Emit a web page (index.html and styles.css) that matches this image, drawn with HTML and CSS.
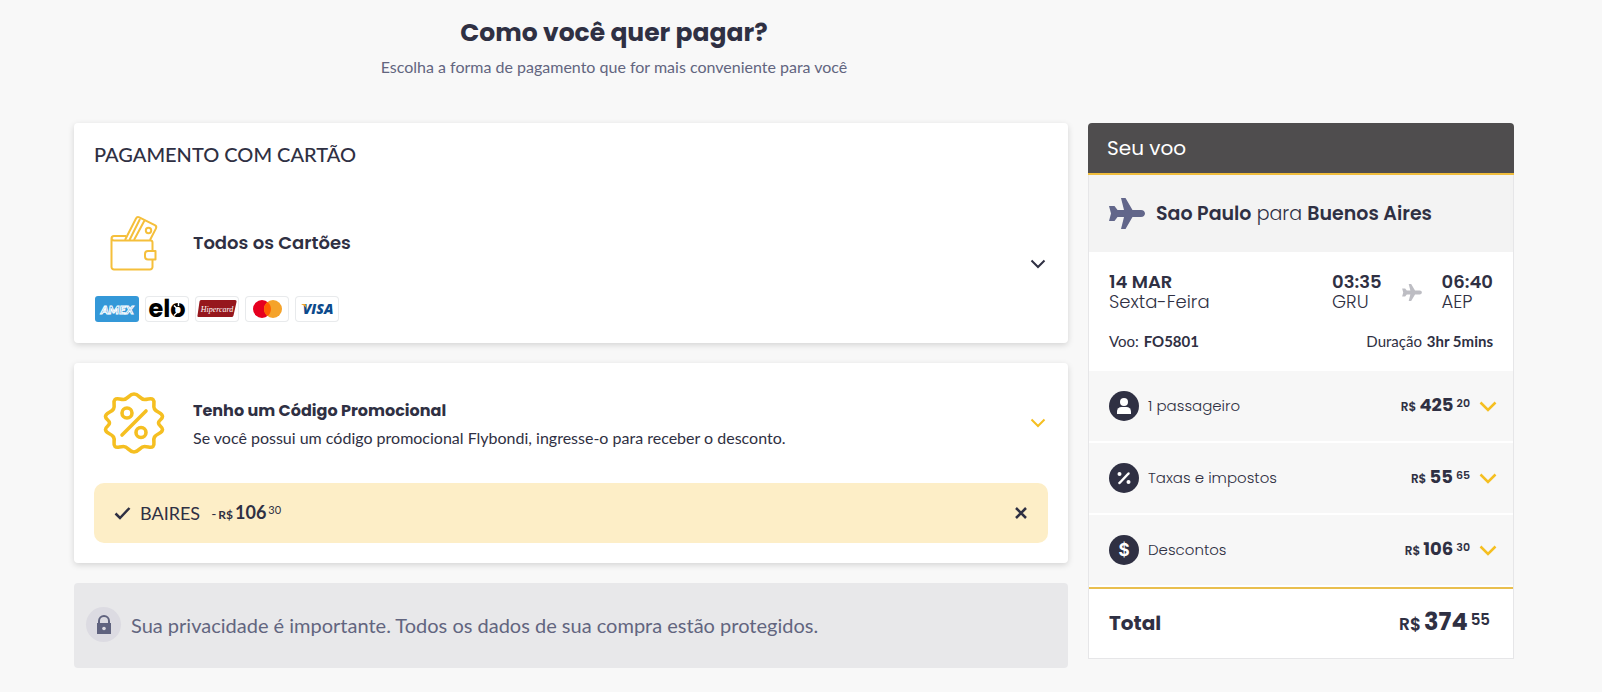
FILE: index.html
```html
<!DOCTYPE html>
<html lang="pt-BR">
<head>
    <meta charset="UTF-8">
    <meta name="viewport" content="width=device-width, initial-scale=1.0">
    <title>Pagamento</title>
    <link rel="stylesheet" href="styles.css">
</head>
<body>
    <div class="container">
        <header class="page-header">
            <h1>Como você quer pagar?</h1>
            <p>Escolha a forma de pagamento que for mais conveniente para você</p>
        </header>

        <div class="layout">
            <main class="payment">
                <!-- Card payment -->
                <section class="card">
                    <h2>PAGAMENTO COM CARTÃO</h2>
                    <div class="method">
                        <div class="method-main">
                            <div class="method-row">
                                <div class="method-icon">
                                    <svg width="48" height="56" viewBox="0 0 48 56" fill="none" stroke="#f5bf3b" stroke-width="2" stroke-linejoin="round">
                                        <path d="M15 25 26 3.500c.7-1.400 1.900-1.900 3.300-1.200l15.500 7.900c1.400.7 1.800 1.800 1.200 3.200L40 25"/>
                                        <path d="M19.500 25 30 4M24 25 34.500 5.500"/>
                                        <circle cx="38.500" cy="15.500" r="2.700"/>
                                        <path d="M16 21H4a2.500 2.500 0 0 0-2.500 2.500V52A2.500 2.500 0 0 0 4 54.500h36a2.500 2.500 0 0 0 2.500-2.500v-7.500M42.500 36v-8.500a2 2 0 0 0-2-2H4a2 2 0 0 1-2-2"/>
                                        <path d="M45.500 36h-7.500a3 3 0 0 0-3 3v2.500a3 3 0 0 0 3 3h7.500z"/>
                                    </svg>
                                </div>
                                <h3>Todos os Cartões</h3>
                            </div>
                            <div class="brands">
                                <svg class="brand" viewBox="0 0 44 26" role="img" aria-label="Amex">
                                    <rect width="44" height="26" rx="3" fill="#3498d8"/>
                                    <text class="logo-amex" x="22" y="18" text-anchor="middle">AMEX</text>
                                </svg>
                                <svg class="brand brand-outline" viewBox="0 0 44 26" role="img" aria-label="Elo">
                                    <text class="logo-elo" x="22" y="21" text-anchor="middle">elo</text>
                                    <path d="M29 9.500l3 3M29 19.500l3-3M33.500 5v5" stroke="#fff" stroke-width="1.500"/>
                                </svg>
                                <svg class="brand brand-outline" viewBox="0 0 44 26" role="img" aria-label="Hipercard">
                                    <path d="M6 4h34a1.500 1.500 0 0 1 1.500 2l-3 13.500a2 2 0 0 1-2 1.500h-33a1 1 0 0 1-1-1.500L4.500 5.500A2 2 0 0 1 6 4z" fill="#96171d"/>
                                    <text class="logo-hiper" x="22" y="16" text-anchor="middle">Hipercard</text>
                                </svg>
                                <svg class="brand brand-outline" viewBox="0 0 44 26" role="img" aria-label="Mastercard">
                                    <circle cx="17" cy="13" r="9" fill="#e6001f"/>
                                    <circle cx="28" cy="13" r="9" fill="#f5a32a"/>
                                    <path d="M22.500 5.900a9 9 0 0 1 0 14.200 9 9 0 0 1 0-14.200z" fill="#ff5f00"/>
                                </svg>
                                <svg class="brand brand-outline" viewBox="0 0 44 26" role="img" aria-label="Visa">
                                    <text class="logo-visa" x="23" y="18" text-anchor="middle">VISA</text>
                                    <path d="M6.500 8h4l1.500 5.500C11 11 9 9.200 6.500 8.500z" fill="#f0a52b"/>
                                </svg>
                            </div>
                        </div>
                        <button class="toggle" type="button" aria-label="Abrir cartões">
                            <svg width="16" height="10" viewBox="0 0 16 10"><path d="M1.500 1.500 8 8l6.500-6.500"/></svg>
                        </button>
                    </div>
                </section>

                <!-- Promo code -->
                <section class="card">
                    <div class="method">
                        <div class="method-main">
                            <div class="method-row promo-row">
                                <div class="method-icon">
                                    <svg width="62" height="64" viewBox="-31 -32 62 64" fill="none" stroke="#f5bf21" stroke-width="3.600" stroke-linecap="round" stroke-linejoin="round">
                                        <path d="M0-29C5-29 6-23.500 10.500-23.500C14.500-23.500 17-25.500 19-23.500C21.500-21 18.500-17.500 20.500-14C22.500-10.500 28.500-10.500 28.500-6.500C28.500-3.500 24.500-3 24.500 0C24.500 3 28.500 3.500 28.500 6.500C28.500 10.500 22.500 10.500 20.500 14C18.500 17.500 21.500 21 19 23.500C17 25.500 14.500 23.500 10.500 23.500C6 23.500 5 29 0 29C-5 29-6 23.500-10.500 23.500C-14.500 23.500-17 25.500-19 23.500C-21.500 21-18.500 17.500-20.500 14C-22.500 10.500-28.500 10.500-28.500 6.500C-28.500 3.500-24.500 3-24.500 0C-24.500-3-28.500-3.500-28.500-6.500C-28.500-10.500-22.500-10.500-20.500-14C-18.500-17.500-21.500-21-19-23.500C-17-25.500-14.500-23.500-10.500-23.500C-6-23.500-5-29 0-29z"/>
                                        <circle cx="-7" cy="-10" r="5"/>
                                        <circle cx="7" cy="9.500" r="5"/>
                                        <path d="M12-12-12 12"/>
                                    </svg>
                                </div>
                                <div class="promo-text">
                                    <h3 class="promo-title">Tenho um Código Promocional</h3>
                                    <p>Se você possui um código promocional Flybondi, ingresse-o para receber o desconto.</p>
                                </div>
                            </div>
                        </div>
                        <button class="toggle toggle-yellow" type="button" aria-label="Abrir código promocional">
                            <svg width="16" height="10" viewBox="0 0 16 10"><path d="M1.500 1.500 8 8l6.500-6.500"/></svg>
                        </button>
                    </div>
                    <div class="coupon">
                        <svg width="17" height="14" viewBox="0 0 17 14" fill="none" stroke="#2f3043" stroke-width="2.500"><path d="M1.500 7.500 6 12 15.500 2"/></svg>
                        <span class="coupon-code">BAIRES</span>
                        <span class="coupon-price">- <small>R$</small><b>106</b><sup>30</sup></span>
                        <button class="coupon-remove" type="button" aria-label="Remover código">
                            <svg width="14" height="14" viewBox="0 0 14 14" fill="none" stroke="#2f3043" stroke-width="2.500"><path d="M2 2l10 10M12 2 2 12"/></svg>
                        </button>
                    </div>
                </section>

                <div class="privacy">
                    <span class="privacy-icon">
                        <svg width="16" height="20" viewBox="0 0 16 20">
                            <path d="M3 9V6a5 5 0 0 1 10 0v3" fill="none" stroke="#60637f" stroke-width="2"/>
                            <path d="M1 8h14v11H1z" fill="#60637f"/>
                            <circle cx="8" cy="13.500" r="1.800" fill="#dcdbe2"/>
                        </svg>
                    </span>
                    <p>Sua privacidade é importante. Todos os dados de sua compra estão protegidos.</p>
                </div>
            </main>

            <!-- Flight summary -->
            <aside class="summary">
                <h2>Seu voo</h2>
                <div class="summary-body">
                    <div class="route">
                        <svg width="36" height="31" viewBox="0 0 36 31" fill="#62668a"><path d="M12 0h4.500l7 12H32c2.500 0 4 1.700 4 3.500S34.500 19 32 19h-8.500l-7 12H12l3-12H8.500l-3 4H0l2-7.500L0 8h5.500l3 4H15z"/></svg>
                        <p><b>Sao Paulo</b> para <b>Buenos Aires</b></p>
                    </div>
                    <div class="flight">
                        <div class="flight-times">
                            <p><b>14 MAR</b><br>Sexta-Feira</p>
                            <p class="departure"><b>03:35</b><br>GRU</p>
                            <svg width="20" height="17" viewBox="0 0 36 31" fill="#bdbdc3"><path d="M12 0h4.500l7 12H32c2.500 0 4 1.700 4 3.500S34.500 19 32 19h-8.500l-7 12H12l3-12H8.500l-3 4H0l2-7.500L0 8h5.500l3 4H15z"/></svg>
                            <p><b>06:40</b><br>AEP</p>
                        </div>
                        <div class="flight-info">
                            <p>Voo: <b>FO5801</b></p>
                            <p>Duração <b>3hr 5mins</b></p>
                        </div>
                    </div>
                    <div class="line">
                        <svg class="line-icon" viewBox="0 0 30 30"><circle cx="15" cy="15" r="15" fill="#2f3043"/><g fill="#fff"><circle cx="15" cy="11" r="4"/><path d="M8 23v-2.500a4.500 4.500 0 0 1 4.500-4.500h5a4.500 4.500 0 0 1 4.500 4.500V23z"/></g></svg>
                        <span class="line-label">1 passageiro</span>
                        <span class="price"><small>R$</small><b>425</b><sup>20</sup></span>
                        <button class="toggle toggle-yellow" type="button" aria-label="Ver passageiros">
                            <svg width="18" height="11" viewBox="0 0 18 11"><path d="M1.500 1.500 9 9l7.500-7.500"/></svg>
                        </button>
                    </div>
                    <div class="line">
                        <svg class="line-icon" viewBox="0 0 30 30"><circle cx="15" cy="15" r="15" fill="#2f3043"/><circle cx="10.500" cy="11" r="2" fill="#fff"/><circle cx="19.500" cy="19" r="2" fill="#fff"/><path d="M19.500 10.500 10.500 20" stroke="#fff" stroke-width="2.500" stroke-linecap="round"/></svg>
                        <span class="line-label">Taxas e impostos</span>
                        <span class="price"><small>R$</small><b>55</b><sup>65</sup></span>
                        <button class="toggle toggle-yellow" type="button" aria-label="Ver taxas">
                            <svg width="18" height="11" viewBox="0 0 18 11"><path d="M1.500 1.500 9 9l7.500-7.500"/></svg>
                        </button>
                    </div>
                    <div class="line">
                        <svg class="line-icon" viewBox="0 0 30 30"><circle cx="15" cy="15" r="15" fill="#2f3043"/><text class="icon-dollar" x="15" y="21" text-anchor="middle">$</text></svg>
                        <span class="line-label">Descontos</span>
                        <span class="price"><small>R$</small><b>106</b><sup>30</sup></span>
                        <button class="toggle toggle-yellow" type="button" aria-label="Ver descontos">
                            <svg width="18" height="11" viewBox="0 0 18 11"><path d="M1.500 1.500 9 9l7.500-7.500"/></svg>
                        </button>
                    </div>
                    <div class="total">
                        <span>Total</span>
                        <span class="price price-total"><small>R$</small><b>374</b><sup>55</sup></span>
                    </div>
                </div>
            </aside>
        </div>
    </div>
</body>
</html>
```
FILE: styles.css
```css
* {
    box-sizing: border-box;
}
body {
    margin: 0;
    padding-right: 14px;
    background-color: #f8f8f8;
    color: #2f3043;
    font-family: Lato, sans-serif;
    font-size: 16px;
    line-height: 24px;
}
h1, h2, h3, p {
    margin: 0;
}
svg {
    display: block;
    flex: none;
    overflow: visible;
}
button {
    padding: 0;
    border: 0;
    background: none;
    cursor: pointer;
}
.container {
    max-width: 1440px;
    margin: 0 auto;
}
.page-header {
    width: 75%;
    padding: 17px 0 44px;
    text-align: center;
}
.page-header h1 {
    font-family: Poppins, Inter, sans-serif;
    font-size: 25px;
    font-weight: 700;
    line-height: 32px;
}
.page-header p {
    margin-top: 6px;
    color: #62657f;
}
.layout {
    display: grid;
    grid-template-columns: minmax(0, 7fr) minmax(0, 3fr);
    align-items: start;
    gap: 20px;
}

/* Payment methods */
.payment {
    display: flex;
    flex-direction: column;
    gap: 20px;
}
.card {
    padding: 20px;
    background: #fff;
    border-radius: 4px;
    box-shadow: 0 2px 6px rgba(0, 0, 0, 0.15);
}
.card h2 {
    margin-bottom: 40px;
    font-size: 20px;
    font-weight: 500;
    line-height: 22px;
}
.card h3 {
    font-family: Poppins, Inter, sans-serif;
    font-size: 18px;
    font-weight: 600;
}
.card .promo-title {
    font-size: 16px;
    font-weight: 700;
}
.method {
    display: flex;
    align-items: center;
    justify-content: space-between;
}
.method-row {
    display: flex;
    align-items: center;
    gap: 19px;
    height: 76px;
}
.promo-row {
    height: 80px;
}
.promo-text {
    padding-top: 3px;
}
.promo-text p {
    margin-top: 3px;
}
.method-icon {
    display: flex;
    justify-content: center;
    width: 80px;
}
.brands {
    display: flex;
    gap: 6px;
    margin-top: 15px;
    padding: 0 0 1px 1px;
}
.brand {
    width: 44px;
    height: 26px;
}
.brand-outline {
    border-radius: 4px;
    box-shadow: inset 0 0 0 1px #e8eaec;
}
.logo-amex {
    fill: none;
    stroke: #fff;
    stroke-width: 1px;
    font: italic 900 12px Lato, sans-serif;
}
.logo-elo {
    font: 700 24px Poppins, Inter, sans-serif;
}
.logo-hiper {
    fill: #fff;
    font: italic 400 8px "Liberation Serif", serif;
}
.logo-visa {
    fill: #0c4a8c;
    font: italic 800 14px "Open Sans", sans-serif;
}
.toggle svg {
    fill: none;
    stroke: #2f3043;
    stroke-width: 2px;
}
.method .toggle {
    margin-right: 2px;
}
.toggle-yellow svg {
    stroke: #f5bf21;
}
.coupon {
    display: flex;
    align-items: center;
    height: 60px;
    margin-top: 20px;
    padding: 0 20px;
    background-color: #fdeec7;
    border-radius: 10px;
}
.coupon-code {
    margin-left: 9px;
    font-size: 18px;
}
.coupon-price {
    display: flex;
    align-items: baseline;
    gap: 2px;
    margin-left: 11px;
    font-size: 14px;
}
.coupon-price small {
    font-size: 12px;
    font-weight: 700;
}
.coupon-price b {
    font-size: 18px;
}
.coupon-price sup {
    align-self: flex-start;
    font-size: 11px;
    line-height: 20px;
}
.coupon-remove {
    margin-left: auto;
}
.privacy {
    display: flex;
    align-items: center;
    gap: 10px;
    min-height: 85px;
    padding: 0 12px 2px;
    background-color: #e8e8ea;
    border-radius: 4px;
    color: #62657f;
    font-size: 20px;
}
.privacy-icon {
    display: flex;
    align-items: center;
    justify-content: center;
    width: 35px;
    height: 35px;
    background-color: #dcdbe2;
    border-radius: 50%;
}

/* Flight summary */
.summary {
    font-family: Poppins, Inter, sans-serif;
}
.summary h2 {
    padding: 13px 19px;
    background-color: #4f4d4e;
    border-bottom: 2px solid #f0bd3c;
    border-radius: 4px 4px 0 0;
    color: #fff;
    font-size: 20px;
    font-weight: 400;
    line-height: 24px;
}
.summary-body {
    border: 1px solid #e6e6e8;
    border-top: 0;
    background-color: #fff;
}
.route {
    display: flex;
    align-items: center;
    gap: 11px;
    min-height: 77px;
    padding: 0 20px;
    background-color: #f3f3f3;
    font-size: 19px;
}
.route p {
    font-weight: 300;
}
.route b, .flight-times b {
    font-weight: 600;
}
.flight {
    padding: 20px 20px 18px;
}
.flight-times {
    display: flex;
    align-items: center;
    gap: 20px;
    font-size: 18px;
    font-weight: 300;
    line-height: 20px;
}
.departure {
    margin-left: auto;
}
.flight-info {
    display: flex;
    justify-content: space-between;
    margin-top: 17px;
    font-family: Lato, sans-serif;
    font-size: 15px;
}
.flight-info b {
    margin-left: 1px;
}
.line {
    display: flex;
    align-items: center;
    height: 72px;
    padding: 0 16px 0 20px;
    border-bottom: 2px solid #fff;
    background-color: #f7f7f7;
}
.line-icon {
    width: 30px;
    height: 30px;
}
.icon-dollar {
    fill: #fff;
    font: 700 17px Inter, sans-serif;
}
.line-label {
    flex: 1;
    margin-left: 9px;
    font-size: 15px;
    font-weight: 300;
}
.price {
    display: flex;
    align-items: baseline;
    gap: 3px;
    font-weight: 600;
}
.price small {
    font-size: 12px;
}
.price b {
    font-size: 18px;
    font-weight: 700;
}
.price sup {
    align-self: flex-start;
    font-size: 11px;
    line-height: 20px;
}
.line .toggle {
    margin-left: 9px;
}
.line .toggle svg {
    stroke-width: 2.5px;
}
.total {
    display: flex;
    align-items: center;
    justify-content: space-between;
    height: 71px;
    padding: 0 23px 2px 20px;
    border-top: 2px solid #e9bf4f;
    font-size: 20px;
    font-weight: 700;
}
.price-total small {
    font-size: 17px;
}
.price-total b {
    font-size: 24px;
}
.price-total sup {
    font-size: 15px;
}
```
